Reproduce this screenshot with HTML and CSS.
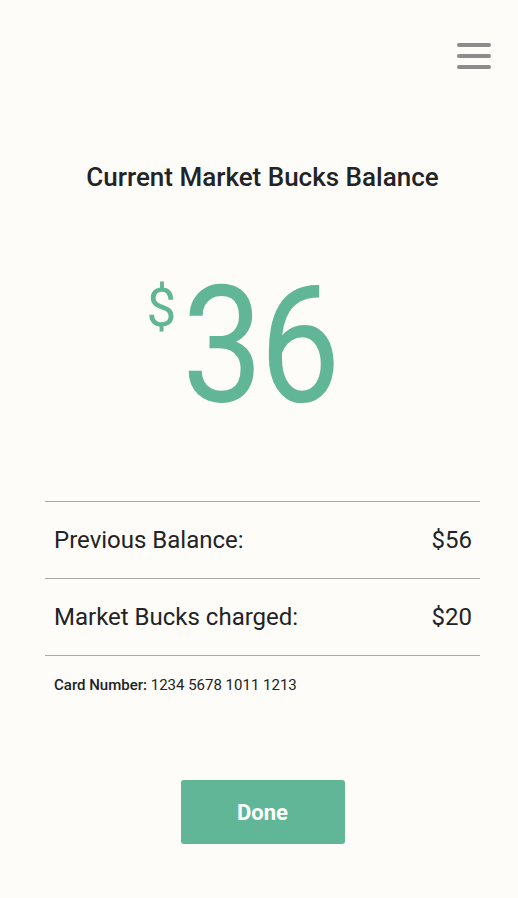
FILE: index.html
```html
<!DOCTYPE html>
<html lang="en">
<head>
<meta charset="utf-8">
<title>Market Bucks Balance</title>
<link rel="stylesheet" href="styles.css">
</head>
<body>
<div class="page">
  <header class="topbar">
    <button class="menu" aria-label="Menu">
      <svg width="34" height="26" viewBox="0 0 34 26">
        <g stroke="#8c8c8c" stroke-width="4" stroke-linecap="round">
          <line x1="2" y1="2" x2="32" y2="2"/>
          <line x1="2" y1="13" x2="32" y2="13"/>
          <line x1="2" y1="24" x2="32" y2="24"/>
        </g>
      </svg>
    </button>
  </header>
  <main class="content">
    <h1 class="title">Current Market Bucks Balance</h1>
    <div class="balance"><span class="currency">$</span><span class="amount">36</span></div>
    <div class="details">
      <div class="row"><span>Previous Balance:</span><span>$56</span></div>
      <div class="row"><span>Market Bucks charged:</span><span>$20</span></div>
    </div>
    <p class="card"><span class="card-label">Card Number:</span> 1234 5678 1011 1213</p>
    <div class="actions"><button class="done">Done</button></div>
  </main>
</div>
</body>
</html>
```
FILE: styles.css
```css
html, body {
  margin: 0;
  padding: 0;
  background: #fdfcf8;
}
body {
  font-family: "Roboto", "Liberation Sans", sans-serif;
  color: #222326;
}
.page {
  width: 518px;
  min-height: 898px;
}
.topbar {
  display: flex;
  justify-content: flex-end;
  padding: 43px 27px 0 0;
}
.menu {
  border: 0;
  background: none;
  padding: 0;
  display: block;
  cursor: pointer;
}
.menu svg { display: block; }
.content {
  padding: 0 38px 0 45px;
}
.title {
  margin: 93px 0 0;
  text-align: center;
  font-size: 26px;
  font-weight: 500;
}
.balance {
  display: flex;
  justify-content: center;
  align-items: flex-start;
  color: #62b698;
  margin-top: 71px;
  height: 170px;
  padding-right: 40px;
}
.currency {
  font-size: 53px;
  line-height: 1;
  margin-top: 19px;
  margin-right: 6px;
}
.amount {
  display: inline-block;
  font-size: 164px;
  line-height: 1;
  font-weight: 400;
  letter-spacing: -4px;
  transform: scaleX(0.88);
  transform-origin: left center;
  margin-right: -20px;
}
.details {
  margin-top: 68px;
  border-top: 1.5px solid #a9a9a9;
}
.row {
  display: flex;
  justify-content: space-between;
  align-items: center;
  height: 76px;
  padding: 0 8px 0 9px;
  font-size: 24px;
  border-bottom: 1.5px solid #a9a9a9;
}
.card {
  margin: 20px 0 0 9px;
  font-size: 15px;
}
.card-label { font-weight: 500; }
.actions {
  display: flex;
  justify-content: center;
  margin-top: 86px;
}
.done {
  width: 164px;
  height: 64px;
  border: 0;
  border-radius: 3px;
  background: #62b698;
  color: #fff;
  font-family: inherit;
  font-size: 22px;
  font-weight: 700;
}
```
